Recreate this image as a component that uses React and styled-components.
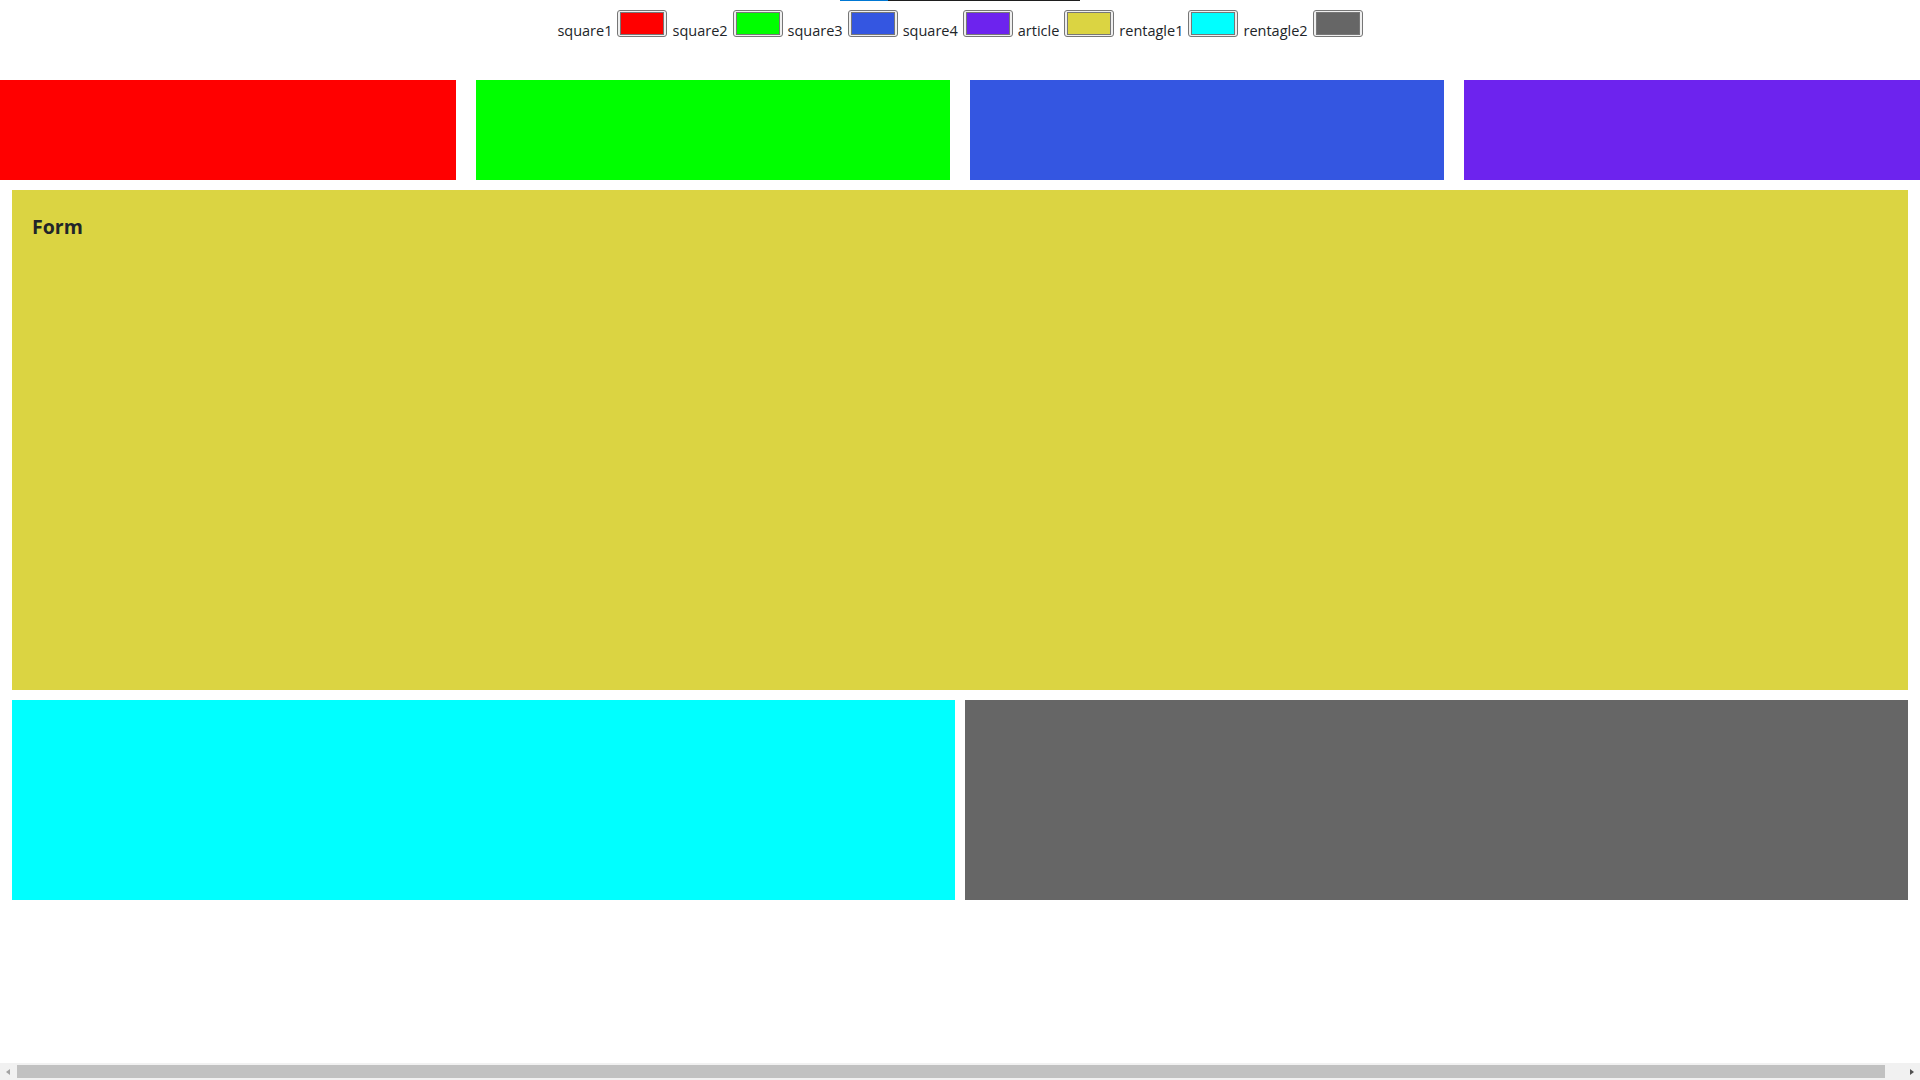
import React from 'react';
import styled, { createGlobalStyle } from 'styled-components';

const GlobalStyle = createGlobalStyle`
  html, body {
    margin: 0;
    padding: 0;
    background: #fff;
    font-family: "Open Sans", "Noto Sans", sans-serif;
    color: #212529;
    overflow: hidden;
  }
`;

const Viewport = styled.div`
  width: 100vw;
  height: 100vh;
  display: flex;
  flex-direction: column;
`;

const Page = styled.div`
  flex: 1;
  min-height: 0;
  overflow: hidden;
`;

const Header = styled.header`
  height: 80px;
  box-sizing: border-box;
`;

const Progress = styled.div`
  width: 240px;
  height: 1px;
  margin: 0 auto;
  display: flex;
`;

const ProgressPart = styled.div`
  height: 100%;
  flex: ${(p) => p.$flex};
  background: ${(p) => p.$color};
`;

const Legend = styled.div`
  padding-top: 9px;
  display: flex;
  justify-content: center;
  align-items: flex-end;
  gap: 5px;
  font-size: 14.5px;
  color: #212529;
`;

const LegendLabel = styled.label`
  white-space: nowrap;
  line-height: 1;
  margin-bottom: -1px;
`;

const ColorInput = styled.input`
  -webkit-appearance: none;
  appearance: none;
  margin: 0;
  width: 50px;
  height: 27px;
  box-sizing: border-box;
  padding: 1px 2px;
  border: 1px solid #767676;
  border-radius: 3px;
  background: #efefef;
  cursor: pointer;

  &::-webkit-color-swatch-wrapper {
    padding: 0;
  }

  &::-webkit-color-swatch {
    border: 1px solid #777;
    border-radius: 0;
  }
`;

const SquareRow = styled.div`
  display: flex;
  gap: 20px;
  width: 1938px;
  height: 100px;
`;

const Square = styled.div`
  flex: 0 0 ${(p) => p.$width}px;
  background: ${(p) => p.$color};
`;

const Article = styled.article`
  margin: 10px 12px 0;
  height: 500px;
  box-sizing: border-box;
  padding: 25px 20px;
  background: ${(p) => p.$color};
`;

const ArticleTitle = styled.h5`
  margin: 0;
  font-size: 19.5px;
  font-weight: 700;
  line-height: 1.2;
  color: #212529;
`;

const RectangleRow = styled.div`
  display: grid;
  grid-template-columns: 1fr 1fr;
  gap: 10px;
  margin: 10px 12px 0;
  height: 200px;
`;

const Rectangle = styled.div`
  background: ${(p) => p.$color};
`;

/* horizontal scrollbar of the page */
const ScrollBar = styled.div`
  flex: 0 0 17px;
  display: flex;
  background: #f1f1f1;
`;

const ScrollButton = styled.div`
  flex: 0 0 17px;
  display: flex;
  align-items: center;
  justify-content: center;

  &::before {
    content: '';
    width: 0;
    height: 0;
    border-top: 3.5px solid transparent;
    border-bottom: 3.5px solid transparent;
    ${(p) =>
      p.$dir === 'left'
        ? `border-right: 4px solid ${p.$color}; margin-left: -1px;`
        : `border-left: 4px solid ${p.$color}; margin-left: 1px;`}
  }
`;

const ScrollTrack = styled.div`
  flex: 1;
  padding: 2px 0;
  box-sizing: border-box;
`;

const ScrollThumb = styled.div`
  height: 100%;
  background: #c1c1c1;
`;

const colors = [
  { name: 'square1', value: '#ff0000' },
  { name: 'square2', value: '#00ff00' },
  { name: 'square3', value: '#3456e1' },
  { name: 'square4', value: '#6d23ee' },
  { name: 'article', value: '#dbd442' },
  { name: 'rentagle1', value: '#00ffff' },
  { name: 'rentagle2', value: '#666666' },
];

const squareWidths = [456, 474, 474, 474];

const App = () => {
  const [values, setValues] = React.useState(
    Object.fromEntries(colors.map((c) => [c.name, c.value]))
  );

  const update = (name) => (e) => setValues({ ...values, [name]: e.target.value });

  // visible width / content width
  const thumbRatio = 1920 / 1938;

  return (
    <>
      <GlobalStyle />
      <Viewport>
        <Page>
          <Header>
            <Progress>
              <ProgressPart $flex={1} $color="#0078d4" />
              <ProgressPart $flex={4} $color="#1e1e1e" />
            </Progress>
            <Legend>
              {colors.map((c) => (
                <React.Fragment key={c.name}>
                  <LegendLabel htmlFor={c.name}>{c.name}</LegendLabel>
                  <ColorInput
                    id={c.name}
                    type="color"
                    value={values[c.name]}
                    onChange={update(c.name)}
                  />
                </React.Fragment>
              ))}
            </Legend>
          </Header>

          <SquareRow>
            {squareWidths.map((w, i) => (
              <Square key={i} $width={w} $color={values[`square${i + 1}`]} />
            ))}
          </SquareRow>

          <Article $color={values.article}>
            <ArticleTitle>Form</ArticleTitle>
          </Article>

          <RectangleRow>
            <Rectangle $color={values.rentagle1} />
            <Rectangle $color={values.rentagle2} />
          </RectangleRow>
        </Page>

        <ScrollBar>
          <ScrollButton $dir="left" $color="#a3a3a3" />
          <ScrollTrack>
            <ScrollThumb style={{ width: `${thumbRatio * 100}%` }} />
          </ScrollTrack>
          <ScrollButton $dir="right" $color="#505050" />
        </ScrollBar>
      </Viewport>
    </>
  );
};

export default App;
